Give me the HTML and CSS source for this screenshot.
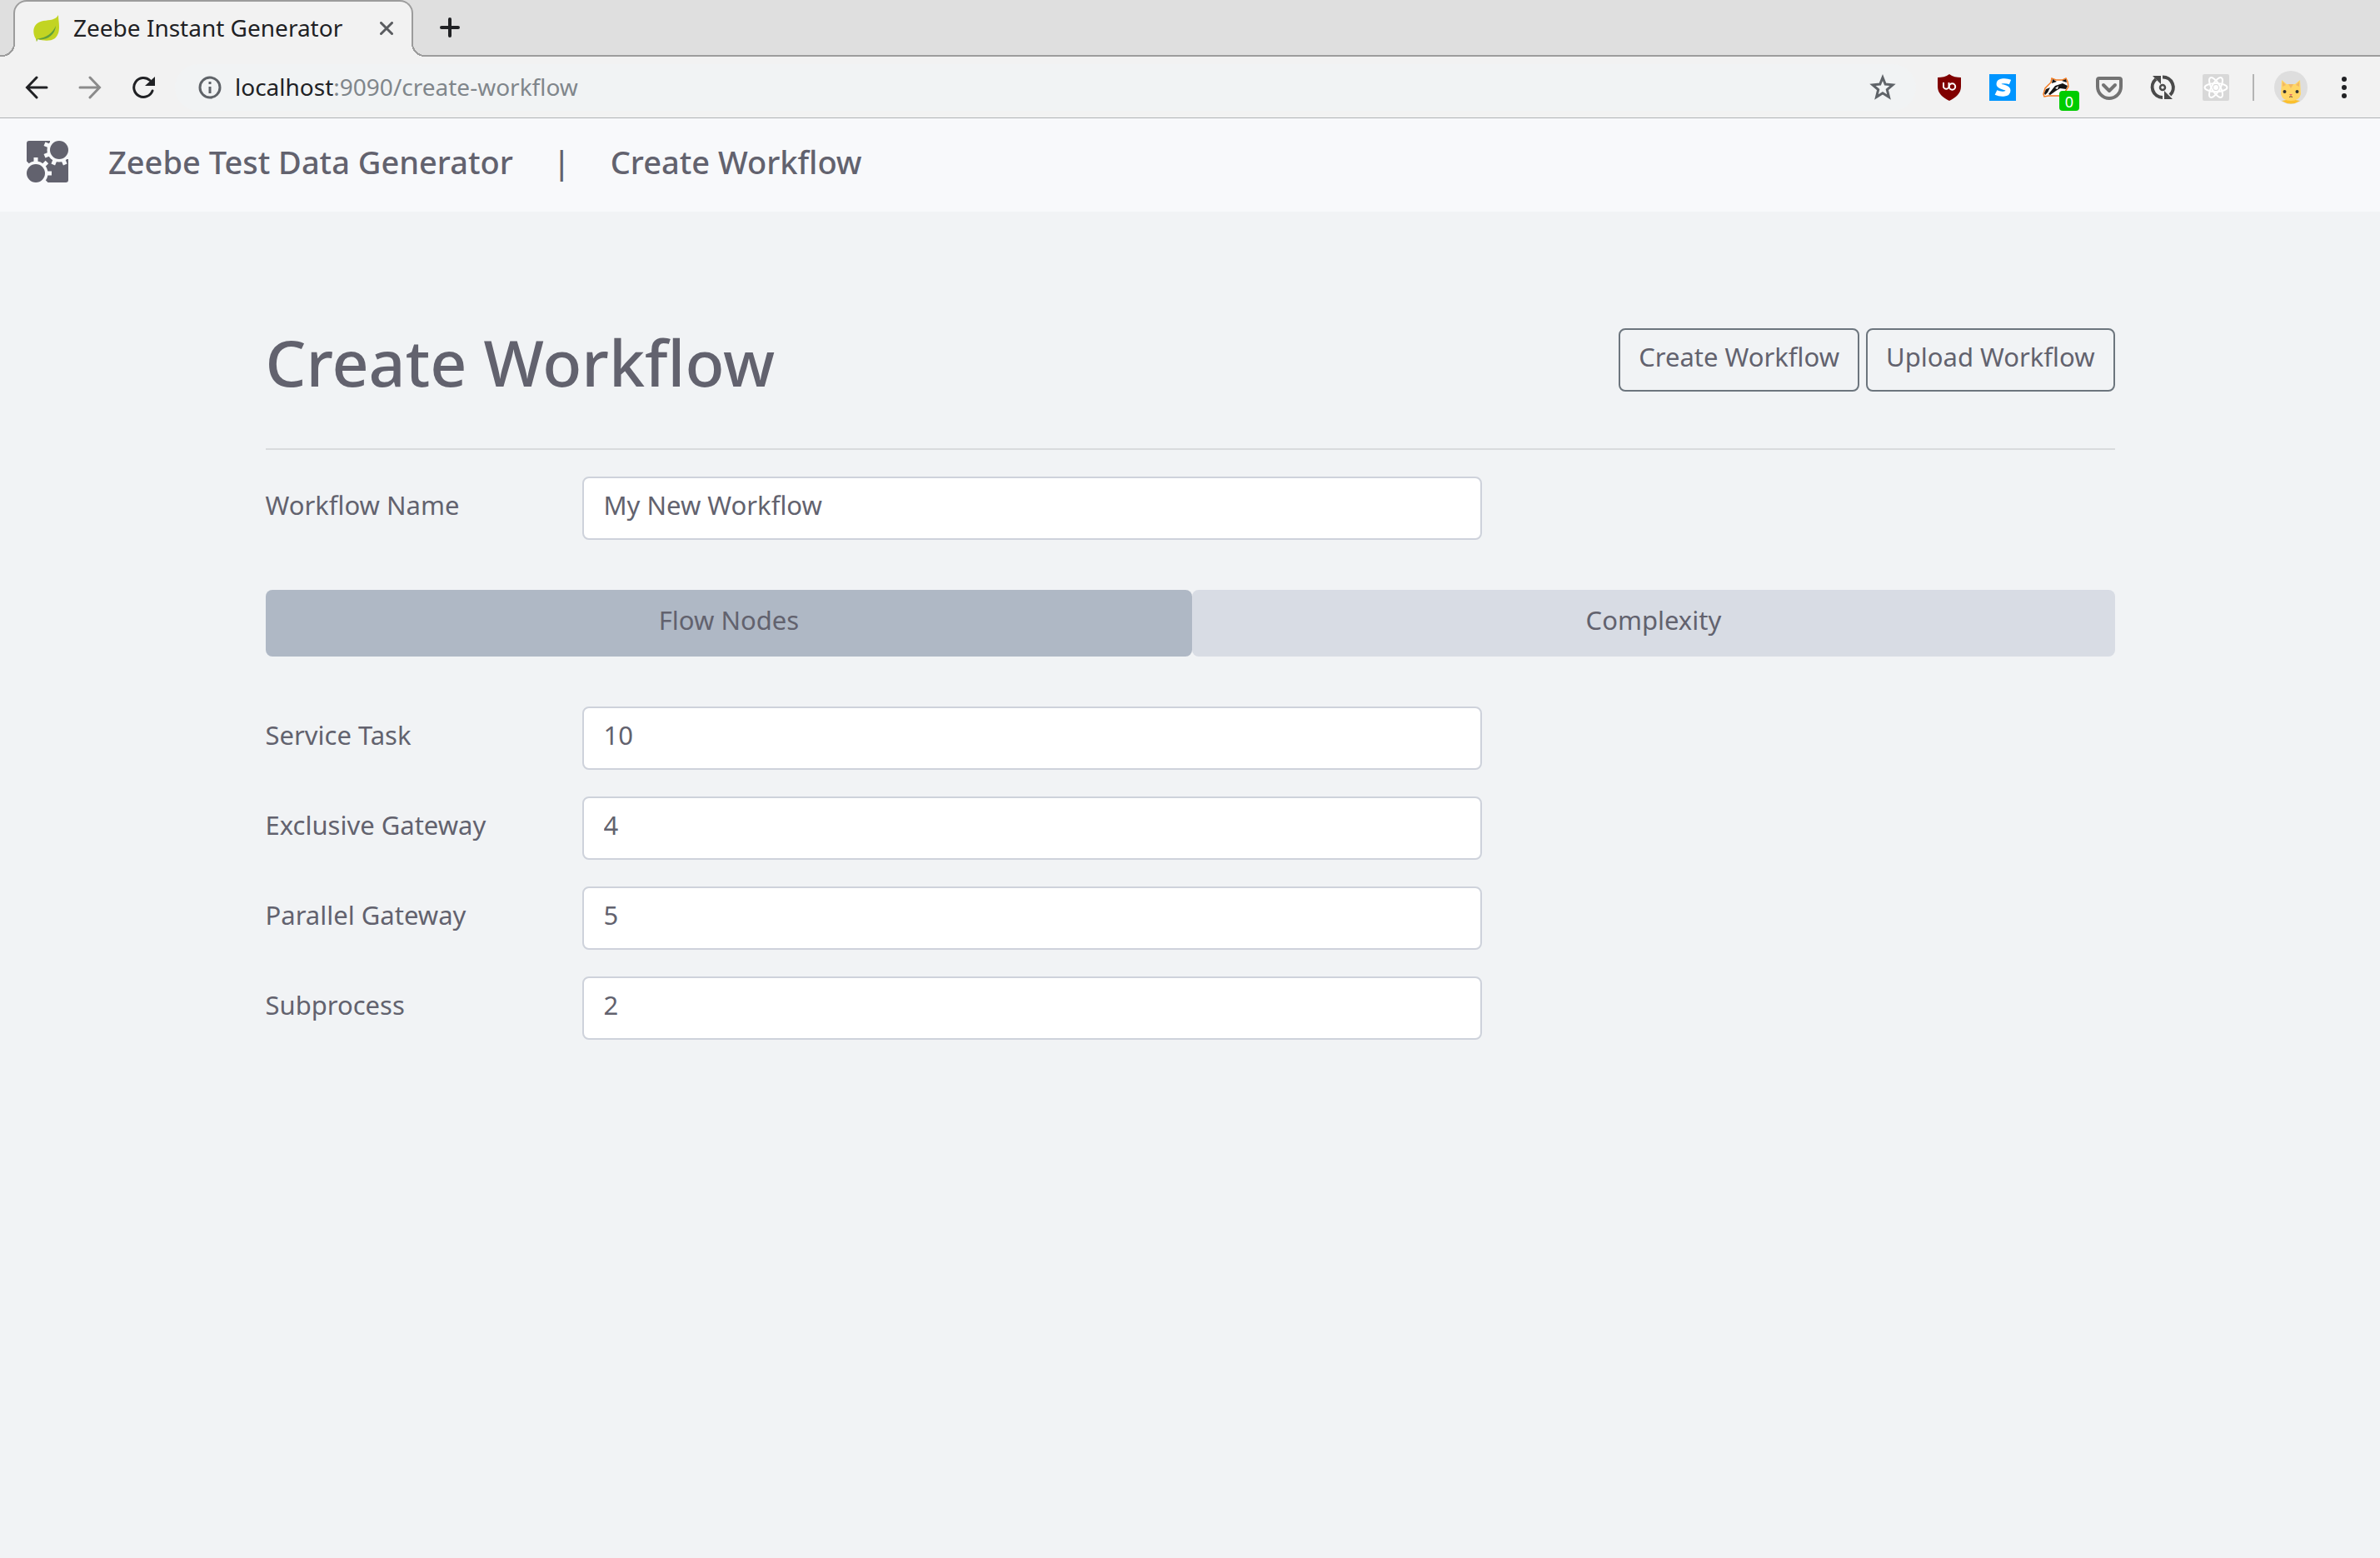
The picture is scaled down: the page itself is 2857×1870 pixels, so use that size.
FILE: index.html
```html
<!DOCTYPE html>
<html lang="en">
<head>
<meta charset="utf-8">
<title>Zeebe Instant Generator</title>
<link rel="stylesheet" href="styles.css">
</head>
<body>
<div class="browser">
  <div class="tabstrip">
    <div class="edge"></div>
    <div class="tab">
      <svg class="favicon" width="32" height="32" viewBox="0 0 32 32"><path d="M30 0C30 9 34 20 26 28C20 32 12 31 5 29L4 32C3 31 4 29 2 27C-2 18 1 9 12 7C20 6 27 6 30 0Z" fill="#c2d422"/><path d="M4 29C16 27 23 22 27 13C26 25 15 31 5 29L4 32Z" fill="#5fa03c"/></svg>
      <span class="tab-title">Zeebe Instant Generator</span>
      <button class="icon-btn" aria-label="Close tab"><svg width="16" height="16" viewBox="0 0 16 16"><path d="M1.500 1.500L14.500 14.500M14.500 1.500L1.500 14.500" stroke="#5a5c60" stroke-width="3" stroke-linecap="round"/></svg></button>
    </div>
    <div class="strip-rest">
      <button class="icon-btn" aria-label="New tab"><svg width="24" height="24" viewBox="0 0 24 24"><path d="M12 2V22M2 12H22" stroke="#202124" stroke-width="4" stroke-linecap="round"/></svg></button>
    </div>
  </div>
  <div class="toolbar">
    <div class="nav-buttons">
      <button class="icon-btn" aria-label="Back"><svg width="28" height="28" viewBox="0 0 28 28" fill="none" stroke="#202124" stroke-width="3" stroke-linecap="round"><path d="M26 14H3M14 2L2.500 14L14 26"/></svg></button>
      <button class="icon-btn" aria-label="Forward"><svg width="28" height="28" viewBox="0 0 28 28" fill="none" stroke="#8b8b8b" stroke-width="3" stroke-linecap="round"><path d="M2 14H25M14 2L25.500 14L14 26"/></svg></button>
      <button class="icon-btn" aria-label="Reload"><svg width="28" height="28" viewBox="0 0 28 28"><path d="M25 18A11.500 11.500 0 1 1 22 5.500" fill="none" stroke="#202124" stroke-width="3" stroke-linecap="round"/><path d="M28 1V12H16Z" fill="#202124"/></svg></button>
    </div>
    <div class="omnibox">
      <svg width="28" height="28" viewBox="0 0 28 28"><circle cx="14" cy="14" r="12" fill="none" stroke="#5f6368" stroke-width="3"/><path d="M14 13V21M14 7V10" stroke="#5f6368" stroke-width="3"/></svg>
      <span class="url"><b>localhost</b>:9090/create-workflow</span>
      <button class="icon-btn" aria-label="Bookmark"><svg width="32" height="32" viewBox="0 0 32 32"><path d="M16 4L19.200 12L28 12.800L21.300 18.500L23.500 27.500L16 22.800L8.500 27.500L10.700 18.500L4 12.800L12.800 12Z" fill="none" stroke="#5f6368" stroke-width="3"/></svg></button>
    </div>
    <div class="extensions">
      <svg width="32" height="32" viewBox="0 0 32 32"><path d="M16 0C20 3 25 4 30 4V15C30 23 24 28 16 32C8 28 2 23 2 15V4C7 4 12 3 16 0Z" fill="#800000"/><path d="M9 10V15.500A3.500 3.500 0 0 0 15.500 15.500V10" fill="none" stroke="#fff" stroke-width="2"/><circle cx="19.500" cy="15" r="3.700" fill="none" stroke="#fff" stroke-width="2"/></svg>
      <svg width="32" height="32" viewBox="0 0 32 32"><path d="M0 0H32V32H0Z" fill="#0095ff"/><path d="M25 9.500C20 7.500 11.500 7.500 11.500 12C11.500 16.500 22.500 14.500 22.500 19.500C22.500 25 13 24.500 8 22" fill="none" stroke="#fff" stroke-width="6"/></svg>
      <span class="badger">
        <svg width="32" height="32" viewBox="0 0 32 32"><path d="M1 24L3 17L10 10L11 5L16 7L24 7L28 5L30 9L31 15L27 21L20 26L7 26L2 27Z" fill="#fff" stroke="#f47b20" stroke-width="1.500"/><path d="M2 23L4 18L9 16L6 22L3 25ZM11 11L12 6L17 9ZM7 24L15 14L24 11L30 14L28 18L21 17L16 20L9 25ZM23 8L28 6L29 10Z" fill="#151515"/><path d="M15 17L19 14L18 18Z" fill="#fff"/></svg>
        <span class="badge">0</span>
      </span>
      <svg width="32" height="32" viewBox="0 0 32 32"><path d="M4 5H28Q30 5 30 7V15A14 14 0 0 1 2 15V7Q2 5 4 5Z" fill="none" stroke="#737373" stroke-width="4"/><path d="M9 13L16 20L23 13" fill="none" stroke="#737373" stroke-width="4" stroke-linecap="round" stroke-linejoin="round"/></svg>
      <svg width="32" height="32" viewBox="0 0 32 32"><g fill="none" stroke="#4a4a4a" stroke-width="4"><path d="M16 28A12.500 12.500 0 0 1 8 6"/><path d="M16 3.500A12.500 12.500 0 0 1 25 25"/><circle cx="16" cy="16" r="3" stroke-width="2.500"/></g><path d="M4 2H14V12ZM28 30H18V20Z" fill="#4a4a4a"/></svg>
      <svg width="32" height="32" viewBox="0 0 32 32"><rect width="32" height="32" rx="2" fill="#d8d8d8"/><g fill="none" stroke="#fff" stroke-width="2"><ellipse cx="16" cy="16" rx="13.500" ry="5"/><ellipse cx="16" cy="16" rx="13.500" ry="5" transform="rotate(60 16 16)"/><ellipse cx="16" cy="16" rx="13.500" ry="5" transform="rotate(120 16 16)"/></g><circle cx="16" cy="16" r="3" fill="#fff"/></svg>
    </div>
    <div class="separator"></div>
    <svg width="40" height="40" viewBox="0 0 40 40"><circle cx="20" cy="20" r="20" fill="#dedede"/><path d="M9 36Q20 33 31 36Q20 43 9 36Z" fill="#fbc02d"/><path d="M8 28L9 11L15 16H25L31 11L32 28Q30 36 20 36Q10 36 8 28Z" fill="#ffd666"/><path d="M10 13L14 17L10 19ZM30 13L26 17L30 19ZM17 16H23L20 21Z" fill="#f2b864"/><circle cx="12.500" cy="25" r="2" fill="#333"/><circle cx="27.500" cy="25" r="2" fill="#333"/><path d="M18 28H22L20 30Z" fill="#e8606a"/><path d="M18 31.500Q20 30 22 31.500" fill="none" stroke="#5d4037"/></svg>
    <button class="icon-btn menu" aria-label="Menu"><svg width="8" height="28" viewBox="0 0 8 28" fill="#202124"><circle cx="4" cy="4" r="3"/><circle cx="4" cy="14" r="3"/><circle cx="4" cy="24" r="3"/></svg></button>
  </div>
</div>
<header class="navbar">
  <svg class="logo" width="50" height="50" viewBox="0 0 50 50">
    <rect width="50" height="50" rx="3" fill="#62626e"/>
    <g fill="#f8f9fb" stroke="#f8f9fb" stroke-width="5">
      <path d="M28 0H50V22H39V11H28ZM0 28H11V39H22V50H0Z" stroke="none"/>
      <circle cx="39" cy="11" r="14.500" stroke="none"/>
      <path d="M21.500 3.750L56.500 18.250M21.500 18.250L56.500 3.750M31.750 28.500L46.250 -6.500M46.250 28.500L31.750 -6.500"/>
      <circle cx="11" cy="39" r="14.500" stroke="none"/>
      <path d="M11 20V58M-8 39H30M-2.400 25.600L24.400 52.400M24.400 25.600L-2.400 52.400"/>
    </g>
    <circle cx="39" cy="11" r="11" fill="#62626e"/><circle cx="11" cy="39" r="11" fill="#62626e"/>
  </svg>
  <a class="crumb" href="#">Zeebe Test Data Generator</a>
  <span class="crumb">|</span>
  <a class="crumb" href="#">Create Workflow</a>
</header>
<main class="container">
  <div class="page-head">
    <h1>Create Workflow</h1>
    <div class="actions">
      <button class="btn">Create Workflow</button>
      <button class="btn">Upload Workflow</button>
    </div>
  </div>
  <form>
    <div class="row"><label for="name">Workflow Name</label><input id="name" type="text" value="My New Workflow"></div>
    <nav class="pills"><a class="pill active" href="#">Flow Nodes</a><a class="pill" href="#">Complexity</a></nav>
    <div class="fields">
      <div class="row"><label for="service">Service Task</label><input id="service" type="text" value="10"></div>
      <div class="row"><label for="exclusive">Exclusive Gateway</label><input id="exclusive" type="text" value="4"></div>
      <div class="row"><label for="parallel">Parallel Gateway</label><input id="parallel" type="text" value="5"></div>
      <div class="row"><label for="sub">Subprocess</label><input id="sub" type="text" value="2"></div>
    </div>
  </form>
</main>
</body>
</html>
```
FILE: styles.css
```css
* { box-sizing: border-box; }
body {
  margin: 0;
  background: #f1f3f5;
  color: #62626e;
  font: 31px/48px "Noto Sans", sans-serif;
}
a { color: inherit; text-decoration: none; }
svg { display: block; flex: none; }
button { font: inherit; color: inherit; }
.icon-btn { padding: 0; border: 0; background: none; flex: none; }

/* Browser window */
.browser { background: #f2f2f2; border-bottom: 1px solid #b0b3b5; font-size: 28px; color: #202124; }
.tabstrip { display: flex; height: 68px; background: #dfdfdf; }
.edge, .strip-rest { border-bottom: 2px solid #9c9c9c; }
.edge { width: 16px; }
.tab {
  position: relative;
  display: flex;
  align-items: center;
  width: 480px;
  padding: 0 22px 2px;
  border: 2px solid #9c9c9c;
  border-bottom: 0;
  border-radius: 16px 16px 0 0;
  background: #f2f2f2;
}
/* Outward curves at the foot of the tab */
.tab::before, .tab::after {
  content: "";
  position: absolute;
  bottom: 0;
  width: 16px;
  height: 16px;
}
.tab::before { left: -16px; background: radial-gradient(circle at 0 0, #dfdfdf 14px, #9c9c9c 14px 16px, #f2f2f2 16px); }
.tab::after { right: -16px; background: radial-gradient(circle at 100% 0, #dfdfdf 14px, #9c9c9c 14px 16px, #f2f2f2 16px); }
.tab-title { flex: 1; margin-left: 16px; padding-bottom: 2px; }
.strip-rest { flex: 1; display: flex; align-items: center; padding-left: 32px; }
.toolbar { display: flex; align-items: center; gap: 24px; height: 73px; padding: 0 39px 0 30px; }
.nav-buttons { display: flex; gap: 36px; }
.omnibox {
  flex: 1;
  display: flex;
  align-items: center;
  height: 56px;
  padding: 0 24px 0 28px;
  border-radius: 28px;
  background: #f1f3f4;
}
.url { flex: 1; margin-left: 16px; padding-bottom: 2px; color: #80868b; }
.url b { font-weight: 400; color: #202124; }
.extensions { display: flex; gap: 32px; margin-right: 4px; }
.badger { position: relative; }
.badge {
  position: absolute;
  left: 20px;
  top: 20px;
  width: 24px;
  height: 24px;
  border-radius: 4px;
  background: #00cc00;
  color: #fff;
  font-size: 18px;
  line-height: 26px;
  text-align: center;
}
.separator { width: 2px; height: 32px; background: #b4b4b4; }
.menu { margin-left: 16px; }

/* Application */
.navbar {
  display: flex;
  align-items: center;
  gap: 48px;
  height: 112px;
  padding: 0 32px 8px;
  background: #f8f9fb;
  font-size: 38px;
  font-weight: 500;
}
.container { max-width: 2280px; margin: 0 auto; padding: 128px 30px 0; }
.page-head {
  display: flex;
  justify-content: space-between;
  align-items: flex-start;
  height: 158px;
  padding-top: 12px;
  margin-bottom: 32px;
  border-bottom: 2px solid #d9dbdd;
}
h1 { margin: 0; font-size: 77px; line-height: 82px; font-weight: 500; }
.actions { display: flex; gap: 8px; }
.btn { height: 76px; padding: 8px 22px 16px; border: 2px solid #6c757d; border-radius: 8px; background: none; }
.row { display: grid; grid-template-columns: repeat(12, 1fr); column-gap: 60px; }
.row label { grid-column: span 2; padding-top: 10px; white-space: nowrap; }
.row input {
  grid-column: span 6;
  min-width: 0;
  height: 76px;
  padding: 8px 24px 16px;
  border: 2px solid #ced2db;
  border-radius: 8px;
  background: #fff;
  color: inherit;
  font: inherit;
}
.pills { display: flex; margin: 60px 0; }
.pill { flex: 1 1 auto; height: 80px; padding: 12px 32px; border-radius: 8px; background: #d8dce4; text-align: center; }
.pill.active { background: #afb8c5; }
.fields { display: grid; gap: 32px; }
```
